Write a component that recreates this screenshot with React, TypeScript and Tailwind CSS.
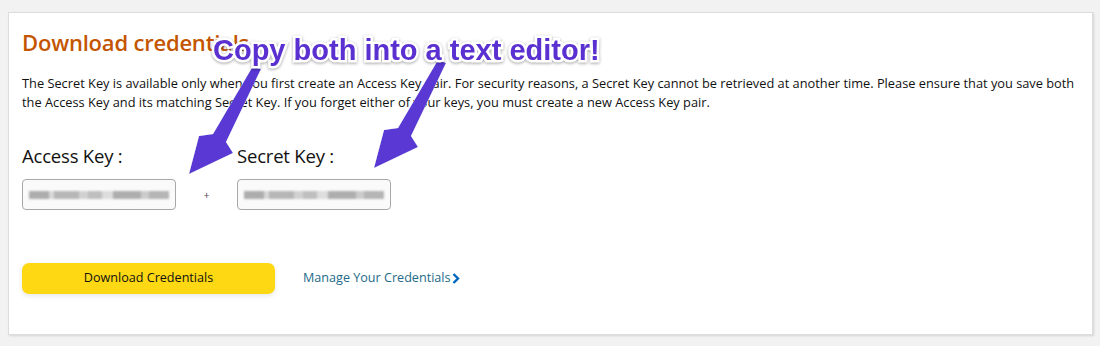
import React from "react";

export default function App() {
  return (
    <div className="w-[1100px] h-[346px] bg-[#f2f2f2] pt-[12px] pl-[8px] relative overflow-hidden" style={{ fontFamily: '"Open Sans", "Noto Sans", sans-serif' }}>
      <div className="w-[1085px] h-[323px] bg-white border border-[#dcdcdc] shadow-[1px_1px_2px_rgba(0,0,0,0.12)] pl-[13px] pt-[15px] text-[#111]">
        <h1 className="text-[22px] leading-[28px] font-semibold text-[#c45500] tracking-[-0.2px]">Download credentials</h1>
        <p className="mt-[18px] text-[12.8px] leading-[19px] text-[#111]">
          The Secret Key is available only when you first create an Access Key pair. For security reasons, a Secret Key cannot be retrieved at another time. Please ensure that you save both
          <br />
          the Access Key and its matching Secret Key. If you forget either of your keys, you must create a new Access Key pair.
        </p>
        <div className="mt-[32px] flex items-end">
          <div className="flex flex-col">
            <div className="text-[18.5px] leading-[24px] tracking-[-0.2px] text-[#111]">Access Key :</div>
            <KeyBox />
          </div>
          <div className="w-[61px] h-[30px] flex items-center justify-center text-[10px] text-[#444]">+</div>
          <div className="flex flex-col">
            <div className="text-[18.5px] leading-[24px] tracking-[-0.2px] text-[#111]">Secret Key :</div>
            <KeyBox />
          </div>
        </div>
        <div className="mt-[53px] flex items-center">
          <button className="w-[253px] h-[31px] rounded-[7px] bg-[#ffd814] shadow-[0_2px_5px_rgba(213,217,217,0.6)] text-[12.6px] text-[#0f1111]">Download Credentials</button>
          <a className="ml-[28px] text-[12.6px] text-[#1d6a8a] flex items-center">
            Manage Your Credentials
            <svg width="8" height="11" viewBox="0 0 8 11" className="ml-[1px]">
              <path d="M1.5 1 L6 5.5 L1.5 10" fill="none" stroke="#0066c0" strokeWidth="2.4" />
            </svg>
          </a>
        </div>
      </div>

      <svg className="absolute left-0 top-0 pointer-events-none" width="1100" height="346" viewBox="0 0 1100 346">
        <defs>
          <filter id="sh" x="-20%" y="-20%" width="140%" height="140%">
            <feDropShadow dx="0" dy="0" stdDeviation="0.6" floodColor="#ffffff" floodOpacity="0.9" />
          </filter>
          <polygon id="arr" points="253,66 261,69 226,142 233,153 189,174 199,136 213,134" />
        </defs>
        <g fill="#5a38d4" filter="url(#sh)">
          <use href="#arr" />
          <use href="#arr" transform="translate(185,-6)" />
        </g>
      </svg>

      <div
        className="absolute left-[213px] top-[32px] text-[29px] leading-[36px] font-bold text-[#5a31d0] [paint-order:stroke_fill] [-webkit-text-stroke:5px_white] [filter:drop-shadow(0_1px_1.5px_rgba(0,0,0,0.35))]"
        style={{ fontFamily: '"Liberation Sans", Arial, sans-serif' }}
      >
        Copy both into a text editor!
      </div>
    </div>
  );
}

function KeyBox() {
  return (
    <div className="mt-[11px] w-[154px] h-[31px] border border-[#a8a8a8] rounded-[4px] bg-[#fafafa] flex items-center px-[6px]">
      <div className="w-full h-[8px] flex blur-[1.2px] opacity-80">
        <div className="w-[14%] bg-[#9a9a9a]" />
        <div className="w-[4%] bg-[#d0d0d0]" />
        <div className="w-[18%] bg-[#a6a6a6]" />
        <div className="w-[6%] bg-[#c8c8c8]" />
        <div className="w-[10%] bg-[#b0b0b0]" />
        <div className="w-[8%] bg-[#d6d6d6]" />
        <div className="w-[20%] bg-[#9c9c9c]" />
        <div className="w-[6%] bg-[#c0c0c0]" />
        <div className="w-[14%] bg-[#a4a4a4]" />
      </div>
    </div>
  );
}
